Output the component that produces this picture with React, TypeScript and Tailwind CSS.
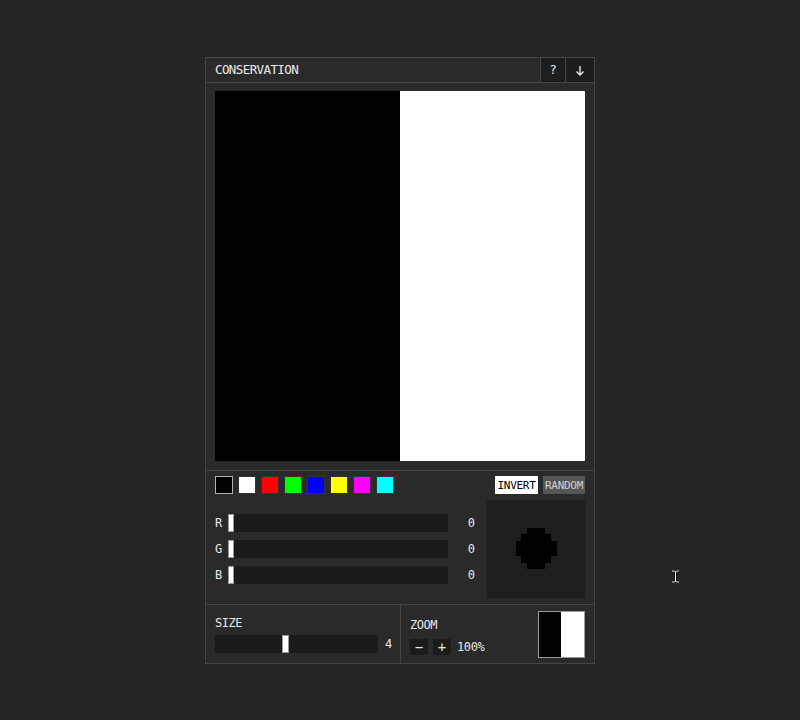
import React from "react";

const mono = { fontFamily: '"DejaVu Sans Mono", "Liberation Mono", monospace' };

const swatches = ["#000000", "#ffffff", "#ff0000", "#00ff00", "#0000ff", "#ffff00", "#ff00ff", "#00ffff"];

function Channel({ label, value }: { label: string; value: number }) {
  return (
    <div className="flex items-center h-[18px]">
      <span className="w-[13px] text-[12px] tracking-[-0.5px] text-[#e6e6e6]">{label}</span>
      <div className="relative w-[220px] h-[18px] bg-[#1b1b1b]">
        <div className="absolute left-0 top-0 w-[6px] h-[18px] bg-white border border-[#999999]" />
      </div>
      <span className="w-[27px] text-right text-[12px] text-[#e6e6e6]">{value}</span>
    </div>
  );
}

export default function App() {
  return (
    <div className="relative w-[800px] h-[720px] bg-[#252525] flex justify-center pt-[57px]" style={mono}>
      <div className="w-[390px] h-[607px] border border-[#454545] bg-[#2a2a2a] flex flex-col">
        {/* header */}
        <div className="flex items-center h-[25px] border-b border-[#454545]">
          <span className="flex-1 pl-[9px] text-[12.5px] tracking-[-0.6px] text-[#ececec]">CONSERVATION</span>
          <button className="w-[25px] h-[24px] bg-[#1d1d1d] border-l border-[#454545] text-[12.5px] text-[#e6e6e6]">?</button>
          <button className="w-[29px] h-[24px] bg-[#1d1d1d] border-l border-[#454545] flex items-center justify-center">
            <svg width="10" height="11" viewBox="0 0 10 11" fill="none" stroke="#e6e6e6" strokeWidth="1.4">
              <path d="M5 1v9M1.5 6.5L5 10l3.5-3.5" />
            </svg>
          </button>
        </div>

        {/* canvas */}
        <div className="pt-[8px] pb-[9px] pl-[9px] border-b border-[#454545]">
          <div className="flex w-[370px] h-[370px]">
            <div className="w-[185px] h-full bg-black" />
            <div className="w-[185px] h-full bg-white" />
          </div>
        </div>

        {/* controls */}
        <div className="pt-[5px] pb-[6px] px-[9px] border-b border-[#454545] flex flex-col gap-[6px]">
          <div className="flex items-center justify-between h-[18px]">
            <div className="flex gap-[5px]">
              {swatches.map((c, i) => (
                <div
                  key={c}
                  className={i === 0 ? "w-[18px] h-[18px] border border-[#b0b0b0]" : "w-[18px] h-[18px] border border-[#333333]"}
                  style={{ backgroundColor: c }}
                />
              ))}
            </div>
            <div className="flex gap-[5px]">
              <button className="w-[43px] h-[18px] bg-white text-black text-[11px] tracking-[-0.3px] leading-none">INVERT</button>
              <button className="w-[42px] h-[18px] bg-[#555555] text-[#cfcfcf] text-[11px] tracking-[-0.3px] leading-none">RANDOM</button>
            </div>
          </div>
          <div className="flex items-center justify-between h-[98px]">
            <div className="flex flex-col gap-[8px]">
              <Channel label="R" value={0} />
              <Channel label="G" value={0} />
              <Channel label="B" value={0} />
            </div>
            <div className="w-[98px] h-[98px] bg-[#1e1e1e]">
              <svg width="98" height="98" viewBox="0 0 98 98">
                <path
                  d="M40 28H58V34H64V41H70V56H64V63H58V69H40V63H34V56H29V41H34V34H40Z"
                  fill="#000000"
                />
              </svg>
            </div>
          </div>
        </div>

        {/* bottom */}
        <div className="flex flex-1">
          <div className="w-[195px] border-r border-[#454545] pl-[9px] flex flex-col justify-center gap-[5px] pt-[1px]">
            <span className="text-[12px] tracking-[-0.5px] text-[#e6e6e6] leading-[13px]">SIZE</span>
            <div className="flex items-center gap-[7px]">
              <div className="relative w-[163px] h-[18px] bg-[#1b1b1b]">
                <div className="absolute left-[67px] top-0 w-[7px] h-[18px] bg-white border border-[#999999]" />
              </div>
              <span className="text-[12px] text-[#e6e6e6]">4</span>
            </div>
          </div>
          <div className="flex-1 pl-[9px] pr-[9px] flex items-center justify-between">
            <div className="flex flex-col gap-[6px] pt-[6px]">
              <span className="text-[12px] tracking-[-0.5px] text-[#e6e6e6] leading-[13px]">ZOOM</span>
              <div className="flex items-center gap-[5px]">
                <button className="w-[18px] h-[16px] bg-[#1c1c1c] text-[#e6e6e6] text-[14px] leading-none">−</button>
                <button className="w-[18px] h-[16px] bg-[#1c1c1c] text-[#e6e6e6] text-[14px] leading-none">+</button>
                <span className="ml-[1px] text-[12px] tracking-[-0.4px] text-[#e6e6e6]">100%</span>
              </div>
            </div>
            <div className="flex w-[47px] h-[47px] border border-[#9a9a9a]">
              <div className="w-[22px] h-full bg-black" />
              <div className="flex-1 h-full bg-white" />
            </div>
          </div>
        </div>
      </div>

      {/* text cursor */}
      <svg className="absolute left-[671px] top-[570px]" width="9" height="13" viewBox="0 0 9 13">
        <path d="M1 1h2.5l1 1 1-1H8M4.5 2v9M1 12h2.5l1-1 1 1H8" fill="none" stroke="#000" strokeWidth="2" />
        <path d="M1 1h2.5l1 1 1-1H8M4.5 2v9M1 12h2.5l1-1 1 1H8" fill="none" stroke="#fff" strokeWidth="1" />
      </svg>
    </div>
  );
}
